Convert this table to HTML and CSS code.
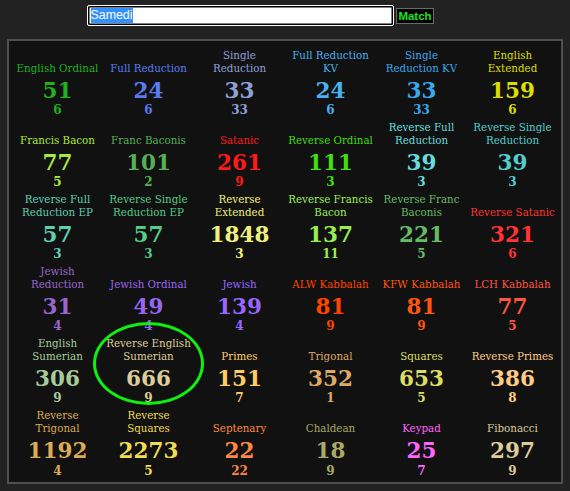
FILE: index.html
```html
<!DOCTYPE html>
<html>
<head>
<meta charset="utf-8">
<link rel="stylesheet" href="styles.css">
</head>
<body>
<div class="top">
  <div class="search"><span class="sel">Samedi</span></div>
  <button class="match">Match</button>
</div>
<div class="panel">
  <div class="grid">
    <div class="cell c-eo"><div class="lbl">English Ordinal</div><div class="num">51</div><div class="red">6</div></div>
    <div class="cell c-fr"><div class="lbl">Full Reduction</div><div class="num">24</div><div class="red">6</div></div>
    <div class="cell c-sr"><div class="lbl">Single<br>Reduction</div><div class="num">33</div><div class="red">33</div></div>
    <div class="cell c-frkv"><div class="lbl">Full Reduction<br>KV</div><div class="num">24</div><div class="red">6</div></div>
    <div class="cell c-srkv"><div class="lbl">Single<br>Reduction KV</div><div class="num">33</div><div class="red">33</div></div>
    <div class="cell c-ee"><div class="lbl">English<br>Extended</div><div class="num">159</div><div class="red">6</div></div>

    <div class="cell c-fb"><div class="lbl">Francis Bacon</div><div class="num">77</div><div class="red">5</div></div>
    <div class="cell c-fbs"><div class="lbl">Franc Baconis</div><div class="num">101</div><div class="red">2</div></div>
    <div class="cell c-sat"><div class="lbl">Satanic</div><div class="num">261</div><div class="red">9</div></div>
    <div class="cell c-ro"><div class="lbl">Reverse Ordinal</div><div class="num">111</div><div class="red">3</div></div>
    <div class="cell c-rfr"><div class="lbl">Reverse Full<br>Reduction</div><div class="num">39</div><div class="red">3</div></div>
    <div class="cell c-rsr"><div class="lbl">Reverse Single<br>Reduction</div><div class="num">39</div><div class="red">3</div></div>

    <div class="cell c-rfre"><div class="lbl">Reverse Full<br>Reduction EP</div><div class="num">57</div><div class="red">3</div></div>
    <div class="cell c-rsre"><div class="lbl">Reverse Single<br>Reduction EP</div><div class="num">57</div><div class="red">3</div></div>
    <div class="cell c-re"><div class="lbl">Reverse<br>Extended</div><div class="num">1848</div><div class="red">3</div></div>
    <div class="cell c-rfb"><div class="lbl">Reverse Francis<br>Bacon</div><div class="num">137</div><div class="red">11</div></div>
    <div class="cell c-rfbs"><div class="lbl">Reverse Franc<br>Baconis</div><div class="num">221</div><div class="red">5</div></div>
    <div class="cell c-rsat"><div class="lbl">Reverse Satanic</div><div class="num">321</div><div class="red">6</div></div>

    <div class="cell c-jr"><div class="lbl">Jewish<br>Reduction</div><div class="num">31</div><div class="red">4</div></div>
    <div class="cell c-jo"><div class="lbl">Jewish Ordinal</div><div class="num">49</div><div class="red">4</div></div>
    <div class="cell c-j"><div class="lbl">Jewish</div><div class="num">139</div><div class="red">4</div></div>
    <div class="cell c-alw"><div class="lbl">ALW Kabbalah</div><div class="num">81</div><div class="red">9</div></div>
    <div class="cell c-kfw"><div class="lbl">KFW Kabbalah</div><div class="num">81</div><div class="red">9</div></div>
    <div class="cell c-lch"><div class="lbl">LCH Kabbalah</div><div class="num">77</div><div class="red">5</div></div>

    <div class="cell c-es"><div class="lbl">English<br>Sumerian</div><div class="num">306</div><div class="red">9</div></div>
    <div class="cell c-res"><div class="lbl">Reverse English<br>Sumerian</div><div class="num">666</div><div class="red">9</div></div>
    <div class="cell c-pr"><div class="lbl">Primes</div><div class="num">151</div><div class="red">7</div></div>
    <div class="cell c-tri"><div class="lbl">Trigonal</div><div class="num">352</div><div class="red">1</div></div>
    <div class="cell c-sq"><div class="lbl">Squares</div><div class="num">653</div><div class="red">5</div></div>
    <div class="cell c-rpr"><div class="lbl">Reverse Primes</div><div class="num">386</div><div class="red">8</div></div>

    <div class="cell c-rtri"><div class="lbl">Reverse<br>Trigonal</div><div class="num">1192</div><div class="red">4</div></div>
    <div class="cell c-rsq"><div class="lbl">Reverse<br>Squares</div><div class="num">2273</div><div class="red">5</div></div>
    <div class="cell c-sep"><div class="lbl">Septenary</div><div class="num">22</div><div class="red">22</div></div>
    <div class="cell c-chal"><div class="lbl">Chaldean</div><div class="num">18</div><div class="red">9</div></div>
    <div class="cell c-key"><div class="lbl">Keypad</div><div class="num">25</div><div class="red">7</div></div>
    <div class="cell c-fib"><div class="lbl">Fibonacci</div><div class="num">297</div><div class="red">9</div></div>
  </div>
  <div class="circle"></div>
</div>
</body>
</html>
```
FILE: styles.css
```css
html, body {
  margin: 0;
  padding: 0;
  background: #222222;
}
body {
  padding: 5px 7px 0 7px;
  font-family: "DejaVu Serif", serif;
}
.top {
  display: flex;
  align-items: center;
  gap: 2px;
  padding-left: 80px;
  height: 21px;
}
.search {
  box-sizing: border-box;
  width: 307px;
  height: 21px;
  border: 1px solid #ffffff;
  border-radius: 2px;
  box-shadow: inset 0 0 0 1.5px #000000;
  background: #ffffff;
  padding: 2px 0 0 2.5px;
  font-family: "Liberation Sans", Arial, sans-serif;
  font-size: 12.4px;
  line-height: 15px;
}
.sel {
  display: inline-block;
  background: #3390ff;
  color: #ffffff;
  height: 15px;
}
.match {
  box-sizing: border-box;
  height: 16px;
  width: 38px;
  margin: 0;
  padding: 0;
  background: #000000;
  border: 1px solid #6a6a6a;
  color: #22e022;
  font-family: "Liberation Sans", Arial, sans-serif;
  font-weight: bold;
  font-size: 11.5px;
  line-height: 14px;
}
.panel {
  position: relative;
  margin-top: 13px;
  box-sizing: border-box;
  width: 556px;
  height: 445px;
  border: 2px solid #505050;
  background: #111111;
  padding-top: 7.5px;
}
.grid {
  display: grid;
  grid-template-columns: repeat(6, 91px);
  justify-content: center;
  row-gap: 4px;
}
.cell {
  display: flex;
  flex-direction: column;
  align-items: center;
  text-align: center;
}
.lbl {
  height: 26px;
  display: flex;
  align-items: flex-end;
  justify-content: center;
  font-size: 10.3px;
  line-height: 13px;
}
.num {
  margin-top: 4px;
  font-size: 21.5px;
  line-height: 24px;
  font-weight: bold;
}
.red {
  margin-top: 1.2px;
  font-size: 12px;
  line-height: 13px;
  font-weight: bold;
}
.circle {
  position: absolute;
  left: 84px;
  top: 281px;
  width: 111px;
  height: 83px;
  box-sizing: border-box;
  border: 3px solid #11ee11;
  border-radius: 50%;
}
.c-eo { color: #22b022; }
.c-fr { color: #5a7cf0; }
.c-sr { color: #8fa0d8; }
.c-frkv { color: #4ab0f0; }
.c-srkv { color: #3aa8ee; }
.c-ee { color: #dddd00; }
.c-fb { color: #a8e840; }
.c-fbs { color: #55b055; }
.c-sat { color: #ff1a1a; }
.c-ro { color: #44dd11; }
.c-rfr { color: #66dddd; }
.c-rsr { color: #55cccc; }
.c-rfre { color: #5cd0b0; }
.c-rsre { color: #55cc88; }
.c-re { color: #f0f080; }
.c-rfb { color: #99ee55; }
.c-rfbs { color: #66bb66; }
.c-rsat { color: #ff3333; }
.c-jr { color: #9966cc; }
.c-jo { color: #9966ee; }
.c-j { color: #9966ff; }
.c-alw { color: #ff4400; }
.c-kfw { color: #ff5511; }
.c-lch { color: #ff5544; }
.c-es { color: #a8cc99; }
.c-res { color: #ddcc99; }
.c-pr { color: #ffcc66; }
.c-tri { color: #ddaa66; }
.c-sq { color: #dddd66; }
.c-rpr { color: #ffcc88; }
.c-rtri { color: #ddaa55; }
.c-rsq { color: #eedd55; }
.c-sep { color: #ff8844; }
.c-chal { color: #aaaa66; }
.c-key { color: #ff66ff; }
.c-fib { color: #ddcc99; }
```
